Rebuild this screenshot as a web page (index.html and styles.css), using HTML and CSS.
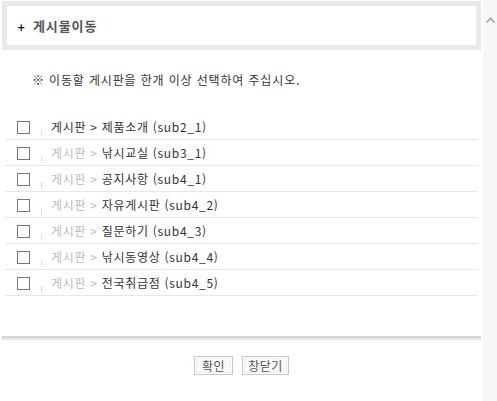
FILE: index.html
```html
<!DOCTYPE html>
<html lang="ko">
<head>
<meta charset="utf-8">
<title>게시물이동</title>
<link rel="stylesheet" href="styles.css">
</head>
<body>
<div class="page">
  <main class="main">
    <div class="head">
      <div class="head-inner"><span class="plus">+</span><h1 class="title">게시물이동</h1></div>
    </div>
    <p class="notice">※ 이동할 게시판을 한개 이상 선택하여 주십시오.</p>
    <ul class="list">
      <li class="row"><span class="chk"></span><span class="tick"></span><span class="path first">게시판 &gt; </span><span class="name">제품소개 (sub2_1)</span></li>
      <li class="row"><span class="chk"></span><span class="tick"></span><span class="path">게시판 &gt; </span><span class="name">낚시교실 (sub3_1)</span></li>
      <li class="row"><span class="chk"></span><span class="tick"></span><span class="path">게시판 &gt; </span><span class="name">공지사항 (sub4_1)</span></li>
      <li class="row"><span class="chk"></span><span class="tick"></span><span class="path">게시판 &gt; </span><span class="name">자유게시판 (sub4_2)</span></li>
      <li class="row"><span class="chk"></span><span class="tick"></span><span class="path">게시판 &gt; </span><span class="name">질문하기 (sub4_3)</span></li>
      <li class="row"><span class="chk"></span><span class="tick"></span><span class="path">게시판 &gt; </span><span class="name">낚시동영상 (sub4_4)</span></li>
      <li class="row"><span class="chk"></span><span class="tick"></span><span class="path">게시판 &gt; </span><span class="name">전국취급점 (sub4_5)</span></li>
    </ul>
    <div class="divider"></div>
    <div class="buttons">
      <button class="btn btn-ok" type="button">확인</button>
      <button class="btn btn-close" type="button">창닫기</button>
    </div>
  </main>
  <div class="scrollbar">
    <svg class="arrow" width="9" height="6" viewBox="0 0 9 6"><path d="M0.5 5.5 L4.5 1.5 L8.5 5.5" fill="none" stroke="#a6a6a6" stroke-width="1.6"/></svg>
  </div>
</div>
</body>
</html>
```
FILE: styles.css
```css
html, body {
  margin: 0;
  padding: 0;
  background: #fff;
}
body {
  font-family: "Noto Sans CJK KR", "DejaVu Sans", sans-serif;
  font-size: 12px;
  color: #333;
}
.page {
  display: flex;
  width: 497px;
  height: 401px;
  overflow: hidden;
}
.main {
  width: 483px;
  padding-top: 1px;
}
.head {
  margin: 0 2px;
  border: 5px solid #e9e9e9;
  background: #fff;
}
.head-inner {
  height: 39px;
  display: flex;
  align-items: center;
  padding-left: 10px;
}
.plus {
  font-family: "DejaVu Sans", sans-serif;
  font-size: 10px;
  font-weight: bold;
  color: #111;
  width: 16px;
  margin-top: 3px;
}
.title {
  margin: 0;
  font-size: 13px;
  font-weight: bold;
  color: #555;
  letter-spacing: 0.9px;
}
.notice {
  margin: 22px 0 0 0;
  padding-left: 32px;
  line-height: 16px;
  font-size: 12px;
  color: #333;
  letter-spacing: 0.85px;
}
.list {
  list-style: none;
  margin: 26px 5px 0;
  padding: 0;
}
.row {
  position: relative;
  height: 25px;
  display: flex;
  align-items: center;
  border-bottom: 1px solid #e6e6e6;
  line-height: 16px;
  letter-spacing: 0.7px;
}
.chk {
  width: 11px;
  height: 11px;
  border: 1px solid #777;
  margin-left: 12px;
  margin-top: 2px;
  flex: none;
}
.tick {
  position: absolute;
  left: 36px;
  bottom: 2px;
  width: 1px;
  height: 7px;
  background: #ddd;
}
.path {
  margin-left: 21px;
  color: #bbb;
  white-space: pre;
}
.path.first {
  color: #333;
}
.name {
  color: #333;
  white-space: pre;
}
.divider {
  margin: 40px 2px 0;
  height: 0;
  border-top: 2px solid #d5d5d5;
  border-bottom: 2px solid #e8e8e8;
}
.buttons {
  display: flex;
  justify-content: center;
  gap: 9px;
  margin-top: 16px;
}
.btn {
  height: 19px;
  padding: 0;
  border: 1px solid #c8c8c8;
  box-shadow: inset 0 0 0 1px #fff, inset 0 0 0 2px #ececec;
  background: #f9f9f9;
  font-family: "Noto Sans CJK KR", "DejaVu Sans", sans-serif;
  font-size: 12px;
  color: #555;
  line-height: 15px;
  border-radius: 0;
  letter-spacing: 0.5px;
}
.btn-ok {
  width: 39px;
}
.btn-close {
  width: 47px;
}
.scrollbar {
  width: 14px;
  background: #f7f7f7;
  display: flex;
  justify-content: center;
  padding-top: 17px;
  box-sizing: border-box;
}
.arrow {
  display: block;
}
```
